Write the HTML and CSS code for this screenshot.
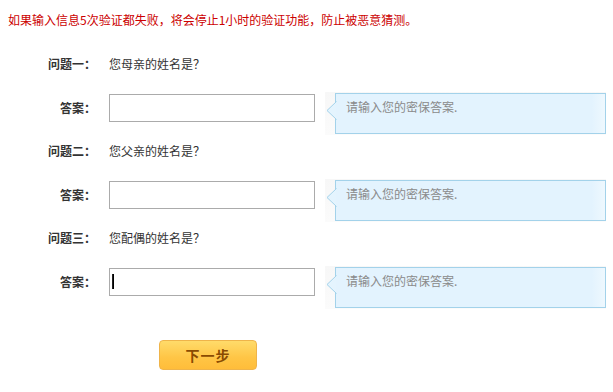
FILE: index.html
```html
<!DOCTYPE html>
<html lang="zh-CN">
<head>
<meta charset="utf-8">
<title>密保问题验证</title>
<link rel="stylesheet" href="styles.css">
</head>
<body>
<p class="notice">如果输入信息5次验证都失败，将会停止1小时的验证功能，防止被恶意猜测。</p>
<div class="form">
  <div class="q-row">
    <span class="label">问题一：</span>
    <span class="question">您母亲的姓名是？</span>
  </div>
  <div class="a-row">
    <span class="label">答案：</span>
    <div class="field"><input class="input" type="text"></div>
    <div class="tip">
      <svg class="arrow" width="11" height="19" viewBox="0 0 11 19"><path d="M10.5 0.5 L1 9.5 L10.5 18.5" fill="#e4f4fe" stroke="#a3d2ea" stroke-width="1"/></svg>
      <div class="tip-box">请输入您的密保答案.</div>
    </div>
  </div>
  <div class="q-row">
    <span class="label">问题二：</span>
    <span class="question">您父亲的姓名是？</span>
  </div>
  <div class="a-row">
    <span class="label">答案：</span>
    <div class="field"><input class="input" type="text"></div>
    <div class="tip">
      <svg class="arrow" width="11" height="19" viewBox="0 0 11 19"><path d="M10.5 0.5 L1 9.5 L10.5 18.5" fill="#e4f4fe" stroke="#a3d2ea" stroke-width="1"/></svg>
      <div class="tip-box">请输入您的密保答案.</div>
    </div>
  </div>
  <div class="q-row">
    <span class="label">问题三：</span>
    <span class="question">您配偶的姓名是？</span>
  </div>
  <div class="a-row">
    <span class="label">答案：</span>
    <div class="field"><input class="input" type="text"><span class="caret"></span></div>
    <div class="tip">
      <svg class="arrow" width="11" height="19" viewBox="0 0 11 19"><path d="M10.5 0.5 L1 9.5 L10.5 18.5" fill="#e4f4fe" stroke="#a3d2ea" stroke-width="1"/></svg>
      <div class="tip-box">请输入您的密保答案.</div>
    </div>
  </div>
  <div class="actions">
    <button class="btn" type="button">下一步</button>
  </div>
</div>
</body>
</html>
```
FILE: styles.css
```css
html, body {
  margin: 0;
  padding: 0;
  background: #fff;
}
body {
  font-family: "Noto Sans CJK SC", "Liberation Sans", sans-serif;
  font-size: 12px;
  color: #333;
}
.notice {
  margin: 0;
  padding: 12px 8px 0 8px;
  height: 38px;
  line-height: 16px;
  color: #cc0000;
  box-sizing: border-box;
}
.form {
  padding-top: 10px;
}
.q-row {
  display: flex;
  align-items: center;
  height: 30px;
}
.label {
  width: 96px;
  flex: none;
  text-align: right;
  font-weight: bold;
  color: #333;
  margin-right: 13px;
}
.question {
  color: #333;
}
.a-row {
  display: flex;
  align-items: flex-start;
  padding-top: 16px;
}
.a-row .label {
  height: 28px;
  line-height: 28px;
}
.field {
  position: relative;
  width: 206px;
  height: 28px;
  flex: none;
}
.input {
  box-sizing: border-box;
  width: 206px;
  height: 28px;
  margin: 0;
  padding: 0 4px;
  border: 1px solid #ababab;
  background: #fff;
  font: inherit;
  outline: none;
}
.caret {
  position: absolute;
  left: 3px;
  top: 6px;
  width: 1px;
  height: 15px;
  background: #000;
  border-left: 1px solid #222;
}
.tip {
  position: relative;
  margin-left: 10px;
  margin-top: -2px;
  padding: 1px 0 1px 10px;
  background: linear-gradient(#f7f7f7, #fbfbfb);
}
.tip-box {
  box-sizing: border-box;
  width: 271px;
  height: 41px;
  padding: 4px 0 0 10px;
  line-height: 18px;
  color: #8a8a8a;
  background: linear-gradient(90deg, #e3f3fe 0%, #e3f3fe 95%, #eef8fe 100%);
  border: 1px solid #a3d2ea;
}
.arrow {
  position: absolute;
  left: 1px;
  top: 9px;
}
.actions {
  padding: 31px 0 0 159px;
}
.btn {
  box-sizing: border-box;
  width: 98px;
  height: 30px;
  margin: 0;
  padding: 0;
  border: 1px solid #efb44a;
  border-radius: 4px;
  background: linear-gradient(#ffdb6a, #ffc545 60%, #ffbd3a);
  color: #8a4b02;
  font-family: inherit;
  font-size: 14px;
  font-weight: bold;
  letter-spacing: 1px;
  cursor: pointer;
}
```
